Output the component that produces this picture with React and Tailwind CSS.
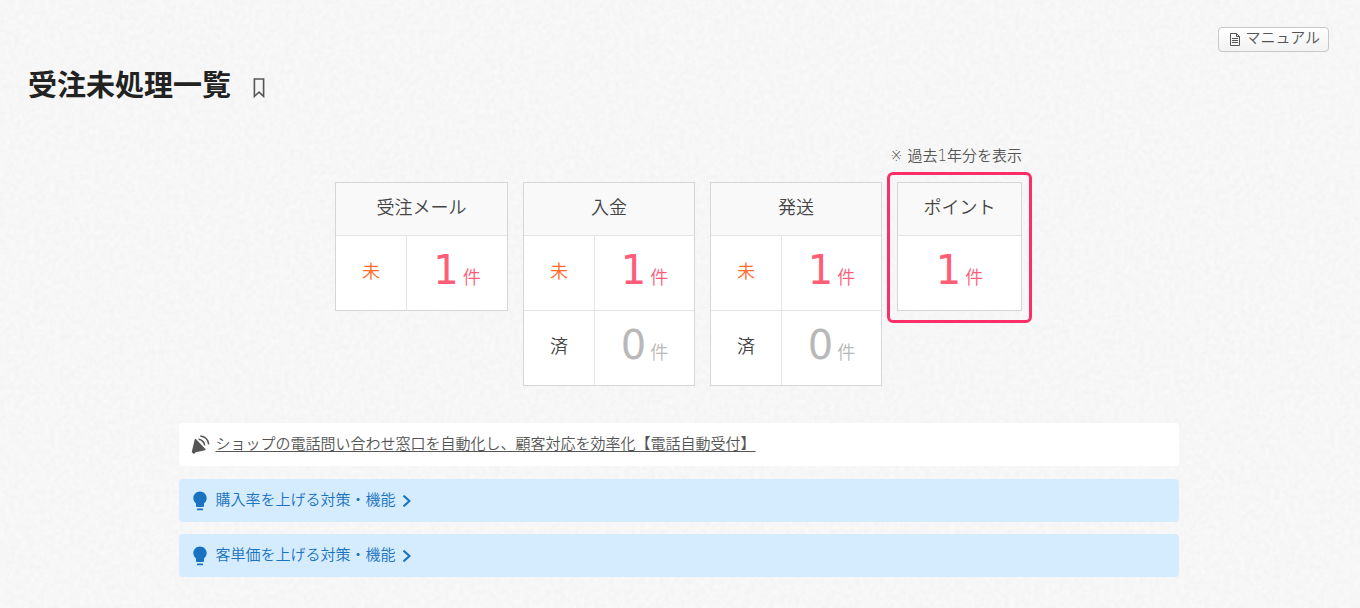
const font = "font-['DejaVu_Sans','Noto_Sans_CJK_JP',sans-serif]";

function Texture() {
  return (
    <svg className="pointer-events-none absolute inset-0 h-full w-full" aria-hidden="true">
      <filter id="paper" x="0" y="0" width="100%" height="100%" colorInterpolationFilters="sRGB">
        <feTurbulence type="fractalNoise" baseFrequency="0.2" numOctaves="3" seed="4" />
        <feColorMatrix values="0.035 0 0 0 0.948  0.035 0 0 0 0.948  0.035 0 0 0 0.948  0 0 0 0 1" />
      </filter>
      <rect width="100%" height="100%" filter="url(#paper)" />
    </svg>
  );
}

function DocIcon() {
  return (
    <svg width="10" height="13" viewBox="0 0 10 13" fill="none" stroke="#555" aria-hidden="true">
      <path d="M.5.5h6l3 3v9h-9zM6.5.5v3h3M2 5.5h6M2 7.5h6M2 9.5h6" />
    </svg>
  );
}

function BookmarkIcon() {
  return (
    <svg width="12" height="20" viewBox="0 0 12 20" fill="none" stroke="#555" strokeWidth="1.6" aria-hidden="true">
      <path d="M1.4 1h9.2v17.4L6 14.2 1.4 18.4z" />
    </svg>
  );
}

function HornIcon() {
  return (
    <svg width="19" height="19" viewBox="0 0 19 19" fill="none" aria-hidden="true">
      <path d="M4.9 4.1 14.4 13.9c.5.6.2 1.2-.5 1.4L4.7 17.2 3.6 18.4c-.5.4-1 .4-1.4 0L1 17.2c-.4-.4-.4-.9 0-1.3L3.7 4.6c.2-.7.7-.9 1.2-.5z" fill="#555" />
      <path d="M7.6 4.3c3.2.2 6 3.2 6.1 6.3M9.3.9c4.6.3 8.2 4 8.4 8.5" stroke="#555" strokeWidth="1.5" />
    </svg>
  );
}

function BulbIcon() {
  return (
    <svg width="14" height="20" viewBox="0 0 14 20" fill="#1a73c0" aria-hidden="true">
      <path d="M7 .5C3.300.5.300 3.400.300 7.100c0 2.600 1.400 4.300 2.700 5.500V15c0 .5.400.9.900.9h6.200c.5 0 .9-.4.9-.9v-2.400c1.300-1.200 2.700-2.900 2.700-5.500C13.700 3.400 10.700.5 7 .5z" />
      <rect x="4" y="17.4" width="6" height="1.8" rx=".5" />
    </svg>
  );
}

function ChevronIcon() {
  return (
    <svg width="8" height="12" viewBox="0 0 8 12" fill="none" stroke="#1a73c0" strokeWidth="2.2" strokeLinecap="round" strokeLinejoin="round" aria-hidden="true">
      <path d="M1.2 1.2 6.5 6 1.2 10.8" />
    </svg>
  );
}

function Count({ value }) {
  return (
    <span className={value > 0 ? "text-[#ff5c77]" : "text-[#b8b8b8]"}>
      <span className="mr-1 text-[40px] leading-10 font-normal">{value}</span>
      <span className="text-lg leading-10">件</span>
    </span>
  );
}

function Board({ title, rows, width }) {
  const labelled = rows.some((row) => row.label);
  return (
    <table className={`${width} table-fixed border-separate border-spacing-0 border border-[#d6d6d6] bg-white text-lg font-[350] text-[#444]`}>
      {labelled && (
        <colgroup>
          <col className="w-[70px]" />
          <col />
        </colgroup>
      )}
      <thead>
        <tr>
          <th colSpan={labelled ? 2 : 1} className="h-[52px] bg-[#f9f9f9] p-0 pb-0.5 font-[350]">
            {title}
          </th>
        </tr>
      </thead>
      <tbody>
        {rows.map((row) => (
          <tr key={row.label || title}>
            {row.label && (
              <th
                scope="row"
                className={`border-t border-[#e4e4e4] p-0 pb-0.5 font-[350] ${row.label === "未" ? "text-[#ff6a28]" : "text-[#444]"}`}
              >
                {row.label}
              </th>
            )}
            <td className={`h-[75px] border-t border-[#e4e4e4] p-0 pt-0.5 text-center ${row.label ? "border-l" : ""}`}>
              <Count value={row.value} />
            </td>
          </tr>
        ))}
      </tbody>
    </table>
  );
}

function TipLink({ children }) {
  return (
    <a href="#" className="flex h-[43px] items-center rounded bg-[#d5ecff] pl-[14px] text-[15px] font-[350] text-[#1a73c0]">
      <BulbIcon />
      <span className="mr-[7px] ml-[9px]">{children}</span>
      <ChevronIcon />
    </a>
  );
}

export default function App() {
  return (
    <div className={`relative min-h-screen bg-[#f6f6f6] ${font}`}>
      <Texture />
      <div className="relative pt-[27px] pr-[31px] pb-8 pl-7">
        <header>
          <div className="flex justify-end">
            <button className="flex h-[25px] items-center gap-[5px] rounded border border-[#c8c8c8] bg-linear-to-b from-white to-[#f2f2f2] pr-2 pl-[11px] text-[15px] font-[350] text-[#555]">
              <DocIcon />
              <span className="pb-0.5">マニュアル</span>
            </button>
          </div>
          <div className="mt-3 flex items-center gap-[22px]">
            <h1 className="text-[29px] leading-[44px] font-bold text-[#222]">受注未処理一覧</h1>
            <button aria-label="ブックマーク" className="mt-1">
              <BookmarkIcon />
            </button>
          </div>
        </header>

        <main className="mx-auto mt-9 max-w-[1000px]">
          <div className="mx-auto w-fit">
            <p className="text-right text-[15px] leading-6 font-[350] text-[#555]">※ 過去1年分を表示</p>
            <div className="mt-[14px] flex min-h-[204px] items-start gap-[15px]">
              <Board width="w-[173px]" title="受注メール" rows={[{ label: "未", value: 1 }]} />
              <Board width="w-[172px]" title="入金" rows={[{ label: "未", value: 1 }, { label: "済", value: 0 }]} />
              <Board width="w-[172px]" title="発送" rows={[{ label: "未", value: 1 }, { label: "済", value: 0 }]} />
              <div className="relative">
                <Board width="w-[125px]" title="ポイント" rows={[{ value: 1 }]} />
                <div className="pointer-events-none absolute -inset-[10px] -bottom-3 rounded-md border-3 border-[#fb2d6b]" />
              </div>
            </div>
          </div>

          <div className="mt-[37px] flex h-[43px] items-center rounded bg-white pl-3 text-[15px]">
            <HornIcon />
            <a href="#" className="ml-1.5 font-[350] text-[#555] underline underline-offset-2">
              ショップの電話問い合わせ窓口を自動化し、顧客対応を効率化【電話自動受付】
            </a>
          </div>
          <div className="mt-[13px] flex flex-col gap-3">
            <TipLink>購入率を上げる対策・機能</TipLink>
            <TipLink>客単価を上げる対策・機能</TipLink>
          </div>
        </main>
      </div>
    </div>
  );
}
